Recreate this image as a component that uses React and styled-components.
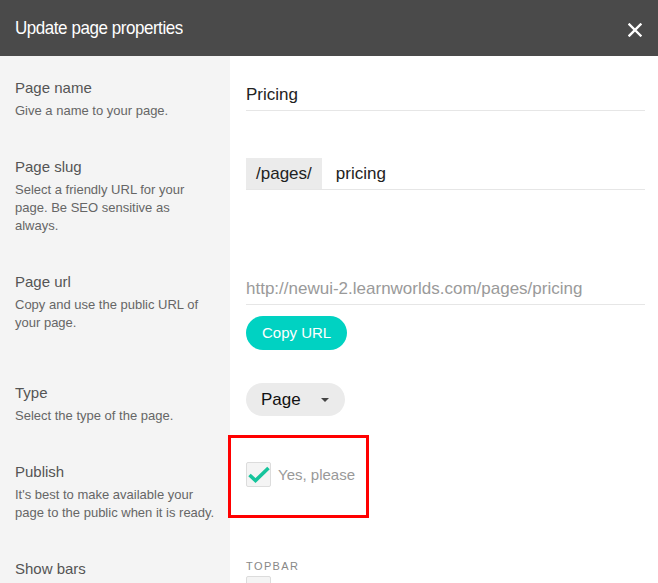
import React from 'react'
import styled, { createGlobalStyle } from 'styled-components'

const GlobalStyle = createGlobalStyle`
  body {
    margin: 0;
    background: #fff;
    font-family: "Liberation Sans", Arial, sans-serif;
  }
`

function CloseIcon() {
  return (
    <svg width="14" height="14" viewBox="0 0 14 14">
      <path d="M1.5 1.5 L12.5 12.5 M12.5 1.5 L1.5 12.5" stroke="#fff" strokeWidth="2.4" strokeLinecap="square" />
    </svg>
  )
}

function CheckIcon() {
  return (
    <svg width="22" height="17" viewBox="0 0 22 17">
      <path d="M1.5 9 L7.5 14.5 L20.5 2" fill="none" stroke="#16c49c" strokeWidth="3.6" strokeLinejoin="miter" />
    </svg>
  )
}

function Row({ title, children, desc }) {
  return (
    <>
      <Label>
        <LabelTitle>{title}</LabelTitle>
        {desc && <LabelDesc>{desc}</LabelDesc>}
      </Label>
      <Field>{children}</Field>
    </>
  )
}

function App() {
  return (
    <>
      <GlobalStyle />
      <Modal>
        <Header>
          <HeaderTitle>Update page properties</HeaderTitle>
          <CloseButton><CloseIcon /></CloseButton>
        </Header>
        <Body>
          <Row title="Page name" desc="Give a name to your page.">
            <TextInput>Pricing</TextInput>
          </Row>
          <Row title="Page slug" desc="Select a friendly URL for your page. Be SEO sensitive as always.">
            <TextInput>
              <Prefix>/pages/</Prefix>
              <SlugValue>pricing</SlugValue>
            </TextInput>
          </Row>
          <Row title="Page url" desc="Copy and use the public URL of your page.">
            <TextInput muted>http://newui-2.learnworlds.com/pages/pricing</TextInput>
            <CopyButton>Copy URL</CopyButton>
          </Row>
          <Row title="Type" desc="Select the type of the page.">
            <SelectPill>
              Page
              <Caret />
            </SelectPill>
          </Row>
          <Row title="Publish" desc="It's best to make available your page to the public when it is ready.">
            <CheckRow>
              <Highlight />
              <CheckBox><CheckIcon /></CheckBox>
              <CheckLabel>Yes, please</CheckLabel>
            </CheckRow>
          </Row>
          <Row title="Show bars">
            <SmallCaps>Topbar</SmallCaps>
            <CheckBox />
          </Row>
        </Body>
      </Modal>
    </>
  )
}

const Modal = styled.div`
  width: 658px;
  min-height: 583px;
  background: #fff;
`
const Header = styled.div`
  height: 56px;
  background: #4a4a4a;
  display: flex;
  align-items: center;
  justify-content: space-between;
  padding: 0 15px 0 15px;
  box-sizing: border-box;
`
const HeaderTitle = styled.h1`
  margin: 0;
  font-size: 17px;
  font-weight: 400;
  letter-spacing: -0.45px;
  color: #fff;
  transform: scaleY(1.12);
`
const CloseButton = styled.div`
  display: flex;
  margin-right: 1px;
  margin-top: 3px;
`
const Body = styled.div`
  display: grid;
  grid-template-columns: 230px 1fr;
`
const Label = styled.div`
  background: #f4f4f4;
  padding: 23px 15px 15px 15px;
`
const LabelTitle = styled.div`
  font-size: 15px;
  line-height: 18px;
  color: #555;
`
const LabelDesc = styled.div`
  margin-top: 5px;
  font-size: 13px;
  line-height: 18px;
  color: #666;
`
const Field = styled.div`
  padding: 23px 13px 11px 16px;
  position: relative;
`
const TextInput = styled.div`
  height: 32px;
  display: flex;
  align-items: center;
  border-bottom: 1px solid #e6e6e6;
  font-size: 17px;
  color: ${p => (p.muted ? '#9a9a9a' : '#222')};
  box-sizing: border-box;
`
const Prefix = styled.span`
  align-self: stretch;
  display: flex;
  align-items: center;
  padding: 0 10px;
  background: #ebebeb;
  color: #222;
`
const SlugValue = styled.span`
  padding-left: 14px;
`
const CopyButton = styled.div`
  display: inline-flex;
  align-items: center;
  margin-top: 11px;
  height: 34px;
  padding: 0 16px 2px;
  box-sizing: border-box;
  border-radius: 17px;
  background: #00d2c2;
  color: #fff;
  font-size: 15px;
`
const SelectPill = styled.div`
  display: inline-flex;
  align-items: center;
  height: 33px;
  margin-top: -1px;
  padding: 0 16px 0 15px;
  border-radius: 17px;
  background: #ebebeb;
  color: #111;
  font-size: 17px;
`
const Caret = styled.span`
  margin-left: 20px;
  width: 0;
  height: 0;
  border-left: 4px solid transparent;
  border-right: 4px solid transparent;
  border-top: 4px solid #444;
`
const CheckRow = styled.div`
  display: flex;
  align-items: center;
  gap: 7px;
  margin-top: -1px;
  position: relative;
`
const Highlight = styled.div`
  position: absolute;
  left: -18px;
  top: -27px;
  width: 135px;
  height: 77px;
  border: 3px solid #ff0000;
`
const CheckBox = styled.div`
  width: 23px;
  height: 23px;
  border: 1px solid #dcdcdc;
  border-radius: 2px;
  background: #f4f4f4;
  display: flex;
  align-items: center;
  justify-content: center;
`
const CheckLabel = styled.span`
  font-size: 15px;
  color: #999;
`
const SmallCaps = styled.div`
  font-size: 11px;
  letter-spacing: 1.4px;
  text-transform: uppercase;
  color: #888;
  margin-bottom: 4px;
`

export default App
